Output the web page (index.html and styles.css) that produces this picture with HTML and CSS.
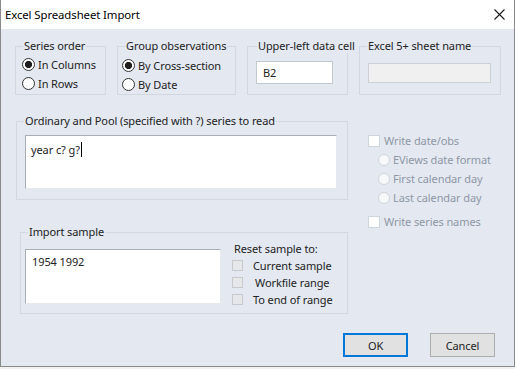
FILE: index.html
```html
<!DOCTYPE html>
<html lang="en">
<head>
    <meta charset="UTF-8">
    <title>Excel Spreadsheet Import</title>
    <link rel="stylesheet" href="styles.css">
</head>
<body>
    <div class="window">
        <div class="titlebar">
            <span class="title">Excel Spreadsheet Import</span>
            <svg class="close" width="11" height="11" viewBox="0 0 11 11">
                <path d="M0.5 0.5L10.5 10.5M10.5 0.5L0.5 10.5" stroke="#1a1a1a" stroke-width="1.1" fill="none"/>
            </svg>
        </div>

        <div class="content">
            <div class="top-row">
                <div class="group group-order">
                    <span class="legend">Series order</span>
                    <div class="radio-row"><span class="radio checked"></span>In Columns</div>
                    <div class="radio-row"><span class="radio"></span>In Rows</div>
                </div>
                <div class="group group-obs">
                    <span class="legend">Group observations</span>
                    <div class="radio-row"><span class="radio checked"></span>By Cross-section</div>
                    <div class="radio-row"><span class="radio"></span>By Date</div>
                </div>
                <div class="group group-cell">
                    <span class="legend">Upper-left data cell</span>
                    <div class="field cell-field">B2</div>
                </div>
                <div class="group group-sheet">
                    <span class="legend">Excel 5+ sheet name</span>
                    <div class="field sheet-field"></div>
                </div>
            </div>

            <div class="mid-row">
                <div class="group group-series">
                    <span class="legend">Ordinary and Pool (specified with ?) series to read</span>
                    <div class="field series-field">year c? g?<span class="caret"></span></div>
                </div>
                <div class="options">
                    <div class="check-row disabled"><span class="checkbox"></span>Write date/obs</div>
                    <div class="check-row disabled sub"><span class="radio small"></span>EViews date format</div>
                    <div class="check-row disabled sub"><span class="radio small"></span>First calendar day</div>
                    <div class="check-row disabled sub"><span class="radio small"></span>Last calendar day</div>
                    <div class="check-row disabled names"><span class="checkbox"></span>Write series names</div>
                </div>
            </div>

            <div class="group group-sample">
                <span class="legend">Import sample</span>
                <div class="field sample-field">1954 1992</div>
                <div class="reset">
                    <div class="reset-title">Reset sample to:</div>
                    <div class="reset-row"><span class="checkbox grey"></span>Current sample</div>
                    <div class="reset-row wide"><span class="checkbox grey"></span>Workfile range</div>
                    <div class="reset-row"><span class="checkbox grey"></span>To end of range</div>
                </div>
            </div>

            <div class="buttons">
                <button class="btn btn-default">OK</button>
                <button class="btn">Cancel</button>
            </div>
        </div>
    </div>
</body>
</html>
```

FILE: styles.css
```css
/* Page */
body {
    margin: 0;
    background: #f2f2f2;
    font-family: "Noto Sans", "Open Sans", sans-serif;
    font-size: 11px;
    letter-spacing: -0.1px;
    color: #222;
}

.window {
    width: 515px;
    height: 367px;
    box-sizing: border-box;
    border: 1px solid #8a8a8a;
    border-top: none;
    background: #e4e9f1;
    display: flex;
    flex-direction: column;
}

/* Title bar */
.titlebar {
    height: 29px;
    flex-shrink: 0;
    background: #ffffff;
    display: flex;
    align-items: center;
    justify-content: space-between;
    padding: 0 9px 0 4px;
    font-size: 11.4px;
    color: #000;
}

.content {
    flex: 1;
    padding: 17px 0 0 14px;
}

/* Group boxes */
.group {
    position: relative;
    flex-shrink: 0;
    box-sizing: border-box;
    border: 1px solid #d1d8e1;
}

.legend {
    position: absolute;
    top: -8px;
    left: 7px;
    padding: 0 1px;
    line-height: 14px;
    white-space: nowrap;
    background: #e4e9f1;
}

.top-row {
    display: flex;
    gap: 11px;
}

.group-order {
    width: 91px;
    height: 49px;
    padding: 8px 0 0 6px;
}

.group-obs {
    width: 119px;
    height: 49px;
    padding: 9px 0 0 4px;
}

.group-cell {
    width: 101px;
    height: 49px;
    padding: 14px 0 0 8px;
}

.group-cell .legend {
    left: 9px;
}

.group-sheet {
    width: 142px;
    height: 49px;
    padding: 16px 0 0 8px;
}

/* Radios and checkboxes */
.radio-row {
    display: flex;
    align-items: center;
    gap: 3px;
    height: 19px;
    white-space: nowrap;
}

.radio {
    width: 13px;
    height: 13px;
    box-sizing: border-box;
    border: 1px solid #333;
    border-radius: 50%;
    background: #fff;
    flex-shrink: 0;
}

.radio.checked {
    background: radial-gradient(circle, #1e1e1e 0 3.3px, #fff 3.9px);
}

.radio.small {
    width: 12px;
    height: 12px;
    border-color: #cfd5dc;
    background: #f7f8fa;
}

.checkbox {
    width: 12px;
    height: 12px;
    box-sizing: border-box;
    border: 1px solid #cfd5dc;
    background: #fff;
    flex-shrink: 0;
}

.checkbox.grey {
    width: 11px;
    height: 11px;
    border-color: #c6c9cd;
    background: #e6e7e9;
}

/* Text fields */
.field {
    box-sizing: border-box;
    background: #fff;
    border: 1px solid #c3c9d1;
    white-space: nowrap;
}

.cell-field {
    width: 77px;
    height: 23px;
    line-height: 21px;
    padding-left: 6px;
}

.sheet-field {
    width: 123px;
    height: 20px;
    background: #f0f0f0;
    border-color: #cdd1d6;
}

.series-field,
.sample-field {
    border-color: #a9aeb5 #e6e9ed #e6e9ed #a9aeb5;
    line-height: 14px;
}

.series-field {
    width: 312px;
    height: 54px;
    padding: 6px 0 0 5px;
}

.sample-field {
    width: 196px;
    height: 55px;
    padding: 5px 0 0 6px;
}

.caret {
    display: inline-block;
    width: 1px;
    height: 15px;
    margin-left: 1px;
    vertical-align: -3px;
    background: #000;
}

/* Middle row */
.mid-row {
    display: flex;
    align-items: flex-start;
    margin: 26px 0 0 1px;
}

.group-series {
    width: 332px;
    height: 79px;
    padding: 13px 0 0 8px;
}

.options {
    margin: 10px 0 0 20px;
}

.check-row {
    display: flex;
    align-items: center;
    gap: 4px;
    height: 19px;
    white-space: nowrap;
}

.check-row.disabled {
    color: #8d97a5;
}

.check-row.sub {
    padding-left: 10px;
    gap: 3px;
}

.check-row.names {
    margin-top: 5px;
}

/* Import sample */
.group-sample {
    width: 328px;
    height: 82px;
    margin: 1px 0 0 5px;
    padding: 16px 0 0 4px;
    display: flex;
    align-items: flex-start;
}

.reset {
    margin: -8px 0 0 11px;
    white-space: nowrap;
}

.reset-title {
    line-height: 16px;
    padding-left: 2px;
}

.reset-row {
    display: flex;
    align-items: center;
    gap: 10px;
    height: 17px;
}

.reset-row.wide {
    gap: 12px;
}

/* Buttons */
.buttons {
    display: flex;
    justify-content: flex-end;
    gap: 22px;
    margin-top: 19px;
    padding-right: 19px;
}

.btn {
    width: 65px;
    height: 24px;
    box-sizing: border-box;
    background: #e1e1e1;
    border: 1px solid #adadad;
    font-family: inherit;
    font-size: inherit;
    letter-spacing: inherit;
    color: #222;
    padding: 0;
}

.btn-default {
    border: 2px solid #0078d7;
}
```
